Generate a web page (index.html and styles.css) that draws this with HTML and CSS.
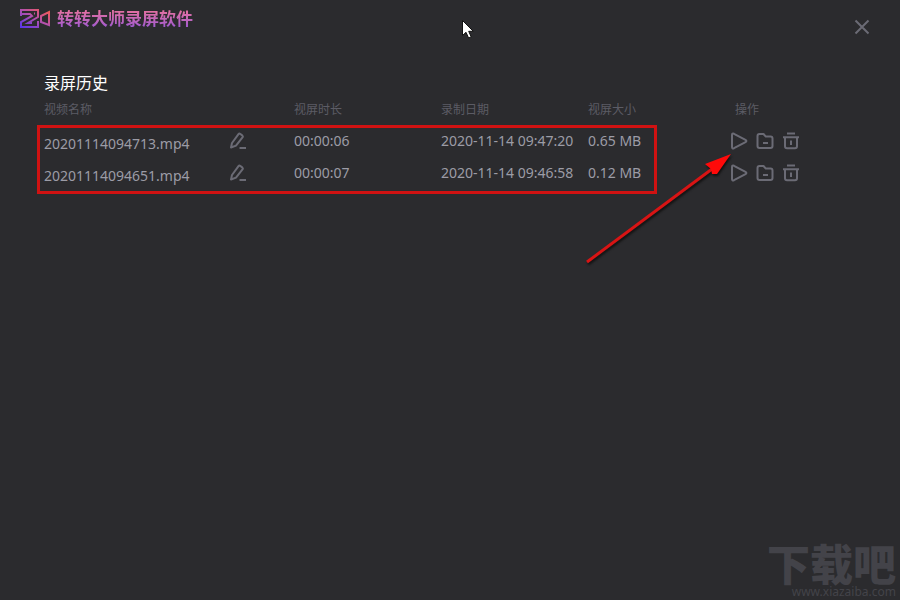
FILE: index.html
```html
<!DOCTYPE html>
<html lang="zh-CN">

<head>
    <meta charset="UTF-8">
    <meta name="viewport" content="width=device-width, initial-scale=1.0">
    <title>录屏历史</title>
    <link rel="stylesheet" href="styles.css">
</head>

<body>
    <!-- Shared icons -->
    <svg class="sprite" aria-hidden="true">
        <symbol id="icon-edit" viewBox="0 0 18 18">
            <path d="M2 15.5 3 11 9.5 2.2Q10.3 1.2 11.4 2L13.2 3.4Q14.3 4.3 13.5 5.4L7 13.6 2 15.5ZM10.5 16H17" />
        </symbol>
        <symbol id="icon-play" viewBox="0 0 18 18">
            <path d="M2 3V15Q2 17 4 16.2L15.5 10.2Q17.3 9 15.5 7.8L4 1.8Q2 1 2 3Z" />
        </symbol>
        <symbol id="icon-folder" viewBox="0 0 18 18">
            <path d="M1.5 4Q1.5 2 3.5 2H7.5L9.8 4.6H14.5Q16.5 4.6 16.5 6.6V14Q16.5 16 14.5 16H3.5Q1.5 16 1.5 14ZM7 11H12" />
        </symbol>
        <symbol id="icon-trash" viewBox="0 0 18 18">
            <path d="M5 1.6H13M1 5.3H17M3 5.5V14.3Q3 16.3 5 16.3H13Q15 16.3 15 14.3V5.5M9 8.5V13" />
        </symbol>
    </svg>

    <div class="window">
        <header class="topbar">
            <div class="brand">
                <svg class="brand-logo" viewBox="0 0 31 20" aria-hidden="true">
                    <defs>
                        <linearGradient id="logo-color" x1="0" y1="1" x2="1" y2="0">
                            <stop offset="0" stop-color="#5a35e8" />
                            <stop offset="0.5" stop-color="#b050b0" />
                            <stop offset="1" stop-color="#fa5b50" />
                        </linearGradient>
                    </defs>
                    <path d="M1 7V1H18V8L8 14H12M1 5H10L12 7 1 13V18H18V12M14 4.5H15M21 7 29 3V16L21 13Z" />
                </svg>
                <span class="brand-name">转转大师录屏软件</span>
            </div>
            <button class="close" type="button" aria-label="关闭">
                <svg viewBox="0 0 16 16"><path d="M1.5 1.5 14.5 14.5M14.5 1.5 1.5 14.5" /></svg>
            </button>
        </header>

        <main class="history">
            <h1>录屏历史</h1>
            <div class="list">
                <table>
                    <thead>
                        <tr>
                            <th class="col-name">视频名称</th>
                            <th>视屏时长</th>
                            <th>录制日期</th>
                            <th>视屏大小</th>
                            <th>操作</th>
                        </tr>
                    </thead>
                    <tbody>
                        <tr>
                            <td>
                                <div class="name">
                                    <span>20201114094713.mp4</span>
                                    <button type="button" aria-label="重命名"><svg><use href="#icon-edit" /></svg></button>
                                </div>
                            </td>
                            <td>00:00:06</td>
                            <td>2020-11-14 09:47:20</td>
                            <td>0.65 MB</td>
                            <td>
                                <div class="actions">
                                    <button type="button" aria-label="播放"><svg><use href="#icon-play" /></svg></button>
                                    <button type="button" aria-label="打开文件夹"><svg><use href="#icon-folder" /></svg></button>
                                    <button type="button" aria-label="删除"><svg><use href="#icon-trash" /></svg></button>
                                </div>
                            </td>
                        </tr>
                        <tr>
                            <td>
                                <div class="name">
                                    <span>20201114094651.mp4</span>
                                    <button type="button" aria-label="重命名"><svg><use href="#icon-edit" /></svg></button>
                                </div>
                            </td>
                            <td>00:00:07</td>
                            <td>2020-11-14 09:46:58</td>
                            <td>0.12 MB</td>
                            <td>
                                <div class="actions">
                                    <button type="button" aria-label="播放"><svg><use href="#icon-play" /></svg></button>
                                    <button type="button" aria-label="打开文件夹"><svg><use href="#icon-folder" /></svg></button>
                                    <button type="button" aria-label="删除"><svg><use href="#icon-trash" /></svg></button>
                                </div>
                            </td>
                        </tr>
                    </tbody>
                </table>
                <div class="highlight"></div>
                <svg class="arrow" viewBox="0 0 150 116" aria-hidden="true">
                    <path class="arrow-line" d="M3 111 128 18" />
                    <path class="arrow-head" d="M147 3 121 13 127 18 128 23 133 23Z" />
                </svg>
            </div>
        </main>

        <footer class="watermark">
            <span class="watermark-name">下载吧</span>
            <span class="watermark-url">www.xiazaiba.com</span>
        </footer>
    </div>

    <svg class="cursor" viewBox="0 0 12 19" aria-hidden="true">
        <path d="M0.5 0.5V15.5L4 12.3 6.6 18 9.2 16.9 6.7 11.3H11.3Z" />
    </svg>
</body>

</html>
```

FILE: styles.css
```css
* {
    box-sizing: border-box;
}

body {
    margin: 0;
    background-color: #2b2b2e;
    color: #9c9ca6;
    font-family: "Noto Sans", "Noto Sans CJK SC", sans-serif;
    font-size: 14px;
}

button {
    display: block;
    padding: 0;
    border: none;
    background: none;
    color: #6b6b75;
    cursor: pointer;
}

button:hover {
    color: #ffffff;
}

svg {
    display: block;
    fill: none;
    stroke: currentColor;
}

.sprite {
    position: absolute;
    width: 0;
    height: 0;
}

.window {
    display: flex;
    flex-direction: column;
    min-height: 100vh;
}

/* Top bar */
.topbar {
    display: flex;
    justify-content: space-between;
    padding: 8px 30px 0 20px;
}

.brand {
    display: flex;
    align-items: center;
    gap: 6px;
    height: 22px;
}

.brand-logo {
    width: 31px;
    height: 20px;
    stroke: url(#logo-color);
    stroke-width: 2;
}

.brand-name {
    font-size: 17px;
    font-weight: 700;
    line-height: 24px;
    color: transparent;
    background: linear-gradient(to bottom, #e070a4 20%, #a05ad0 85%);
    -webkit-background-clip: text;
    background-clip: text;
}

.close {
    margin-top: 11px;
}

.close svg {
    width: 16px;
    height: 16px;
    stroke-width: 2;
}

/* History list */
.history {
    flex: 1;
    padding: 36px 18px 0 44px;
}

h1 {
    margin: 0;
    color: #ffffff;
    font-size: 16px;
    font-weight: 400;
    line-height: 24px;
}

.list {
    position: relative;
}

table {
    width: 100%;
    table-layout: fixed;
    border-collapse: collapse;
}

th {
    height: 30px;
    padding: 0 0 2px;
    color: #5c5c65;
    font-size: 12px;
    font-weight: 400;
    text-align: left;
}

.col-name {
    width: 250px;
}

td {
    height: 32px;
    padding: 0 0 2px;
    white-space: nowrap;
}

.name {
    display: flex;
    align-items: center;
    padding-top: 2px;
}

.name span {
    width: 185px;
    padding-top: 4px;
}

.name svg,
.actions svg {
    width: 18px;
    height: 18px;
    stroke-width: 2;
    stroke-linejoin: round;
}

.actions {
    display: flex;
    gap: 8px;
    margin-left: -5px;
    padding-top: 2px;
}

/* Red marks over the list */
.highlight,
.arrow {
    position: absolute;
    pointer-events: none;
}

.highlight {
    top: 30px;
    left: -7px;
    width: 620px;
    height: 69px;
    border: 3px solid #d01212;
}

.arrow {
    top: 56px;
    left: 540px;
    width: 150px;
    height: 116px;
    filter: drop-shadow(1px 2px 1px #111111);
}

.arrow-line {
    stroke: #d81414;
    stroke-width: 3;
}

.arrow-head {
    fill: #ff0a0a;
    stroke: none;
}

.cursor {
    position: absolute;
    top: 20px;
    left: 462px;
    width: 12px;
    height: 19px;
    fill: #ffffff;
    stroke: #111111;
}

/* Watermark */
.watermark {
    display: flex;
    flex-direction: column;
    align-items: flex-end;
    padding-right: 4px;
    color: #434349;
}

.watermark-name {
    font-family: "Noto Sans CJK SC", sans-serif;
    font-size: 43px;
    font-weight: 900;
    line-height: 44px;
}

.watermark-url {
    font-size: 12px;
    line-height: 16px;
}
```
